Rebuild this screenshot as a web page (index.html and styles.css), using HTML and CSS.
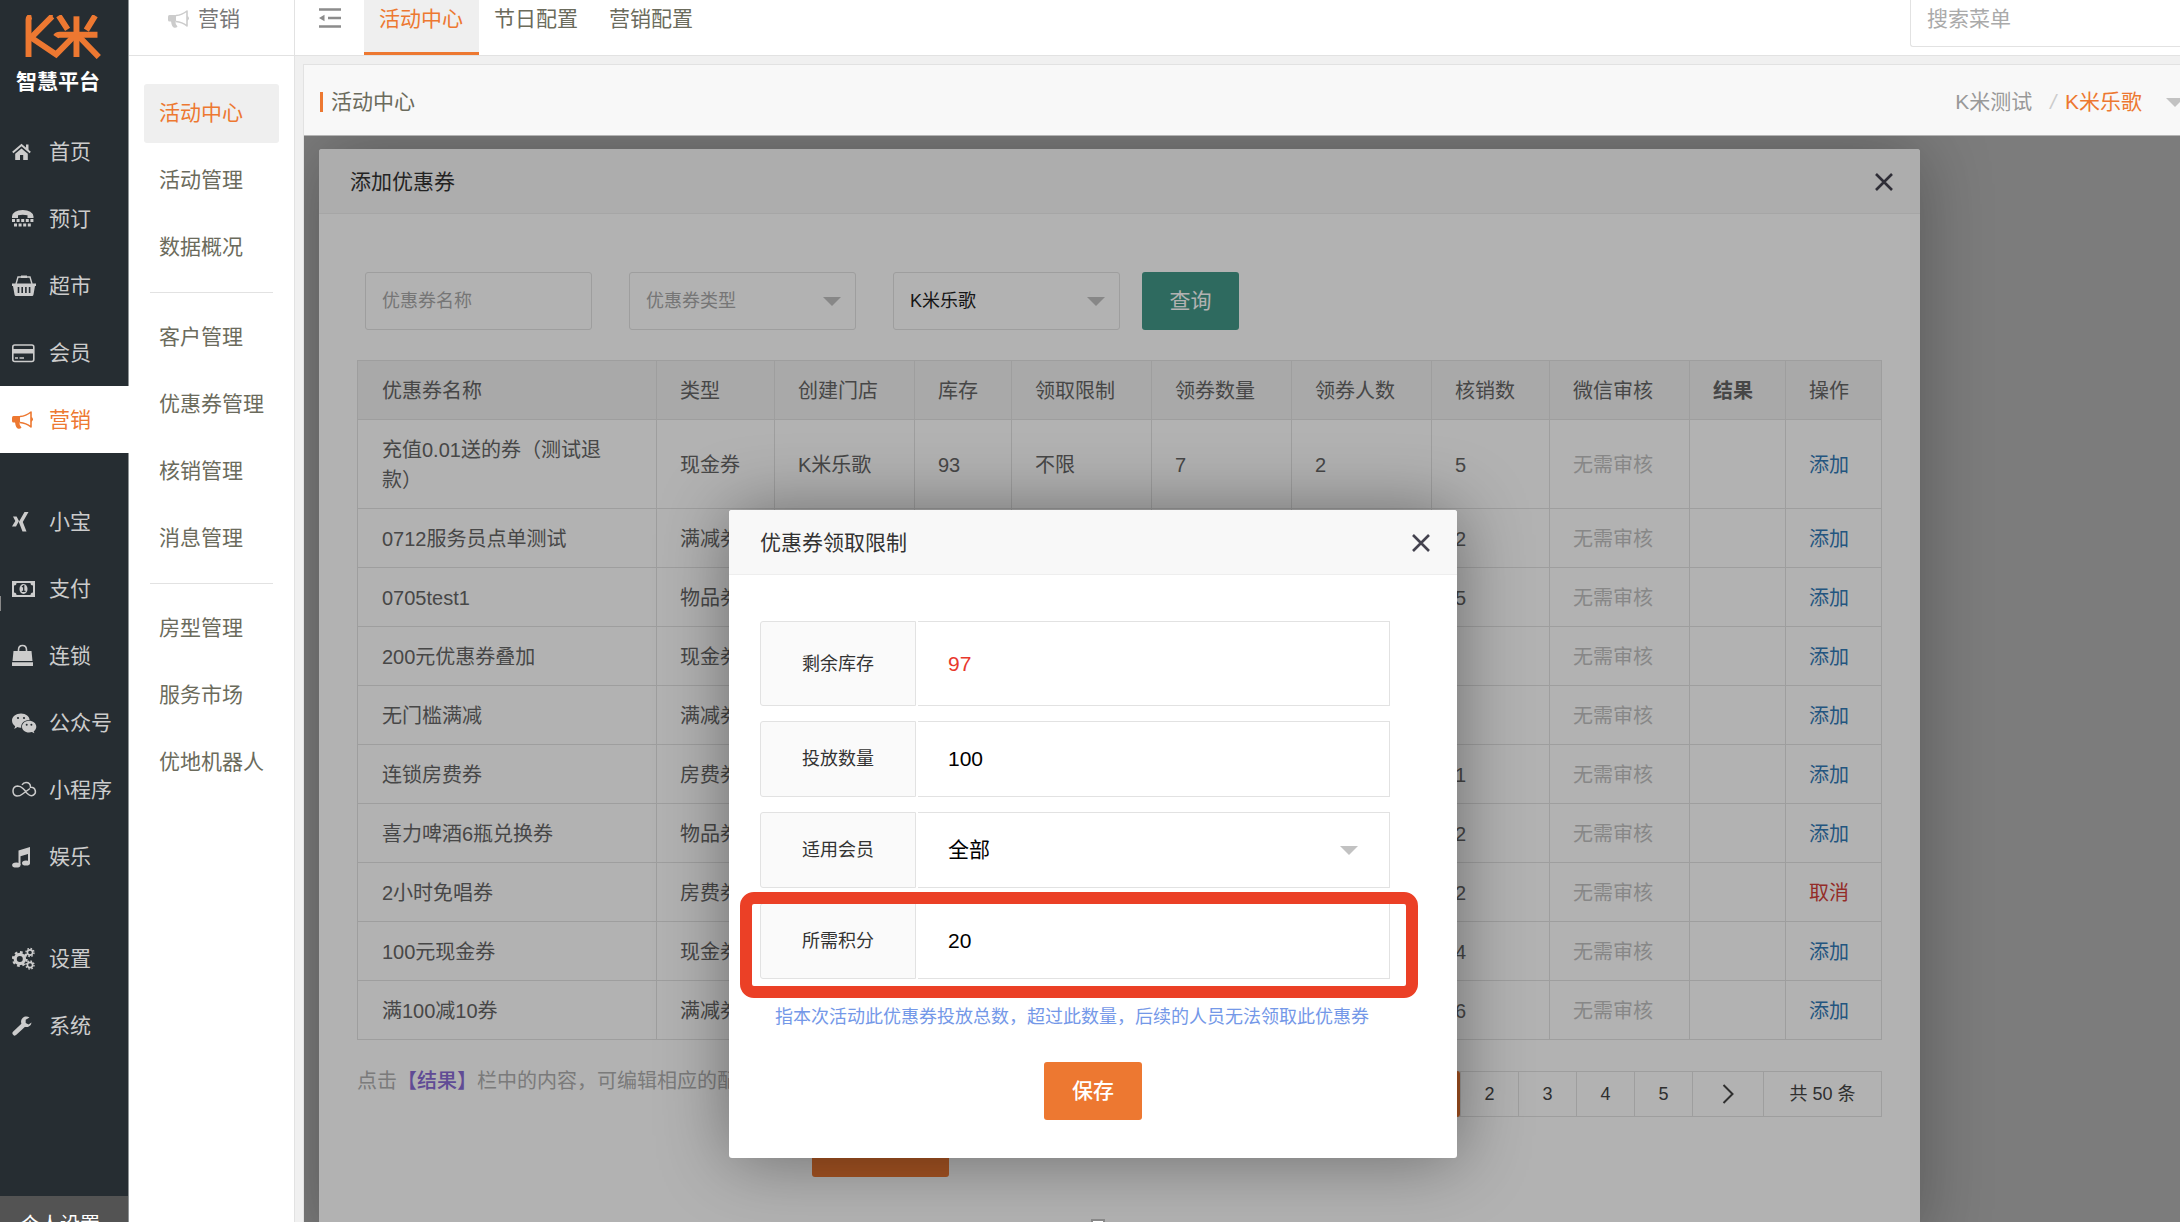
FILE: index.html
```html
<!DOCTYPE html>
<html lang="zh-CN">
<head>
<meta charset="utf-8">
<title>活动中心 - K米智慧平台</title>
<link rel="stylesheet" href="styles.css">
</head>
<body>
<svg class="sprite" aria-hidden="true">
  <symbol id="i-horn" viewBox="0 0 26 24">
    <path d="M1.5 8H8v6.500H1.500Q0 14.500 0 13V9.500Q0 8 1.500 8Z" fill="currentColor"/>
    <path d="M3 14h4.500q-.5 3 2 5.500-1 1.500-3 1.300-2.800-.3-3.500-6.800Z" fill="currentColor"/>
    <path d="M8 8.500Q14 8 19 4v15Q14 15 8 14.500" fill="none" stroke="currentColor" stroke-width="1.600" stroke-linejoin="round"/>
    <path d="M19 9q2 .5 2 2.300T19 14Z" fill="currentColor"/>
  </symbol>
  <symbol id="i-caret" viewBox="0 0 18 9"><path d="M0 0h18L9 9Z" fill="currentColor"/></symbol>
  <symbol id="i-close" viewBox="0 0 18 18"><path d="M1 1l16 16M17 1L1 17" fill="none" stroke="currentColor" stroke-width="2.600"/></symbol>
</svg>

<div class="app">
  <aside class="side">
    <div class="brand">
      <svg class="brand-logo" viewBox="72 44 234 134" role="img" aria-label="K米">
        <g fill="none" stroke="#ed7831" stroke-width="18">
          <path d="M84 172V58q0-8 9-10"/>
          <path d="M158 48h-2L92 113l76 51 57-58"/>
          <path d="M167 110q4-6 12-6h115"/>
          <path d="M230 172V48"/>
          <path d="M176 46l27 42M287 46l-27 44M236 108l62 64"/>
        </g>
      </svg>
      <strong class="brand-name">智慧平台</strong>
    </div>
    <nav class="menu">
      <a href="#"><svg viewBox="0 0 26 24"><path d="M.8 12.500L9.500 5l8.700 7.500" fill="none" stroke="currentColor" stroke-width="2"/><path d="M14 4.500h2.500v6L14 8.500ZM9.500 8.500l6.300 5.300V20h-4.600v-5H8v5H3.200v-6.200Z" fill="currentColor"/></svg>首页</a>
      <a href="#"><svg viewBox="0 0 26 24"><path d="M0 9.500Q1 3 10.700 3t10.800 6.500V11h-6V8.300q-4.800-1.300-9.500 0V11H0Z" fill="currentColor"/><path d="M0 13.500h21.500M2 18h18" stroke="currentColor" stroke-width="3" stroke-dasharray="3 1.600"/></svg>预订</a>
      <a href="#"><svg viewBox="0 0 26 24"><path d="M4 10l2-7h12l2 7" fill="none" stroke="currentColor" stroke-width="1.400"/><path d="M9 1.500h6V4H9ZM0 9.500h24V12h-1l-1.500 8.500Q21.300 22 20 22H4q-1.300 0-1.500-1.500L1 12H0Z" fill="currentColor"/><path d="M6.500 13v6M10.200 13v6M13.900 13v6M17.600 13v6" stroke="#262d32" stroke-width="1.600"/></svg>超市</a>
      <a href="#"><svg viewBox="0 0 26 24"><rect x=".8" y="4" width="21" height="16.500" rx="2" fill="none" stroke="currentColor" stroke-width="1.600"/><path d="M1 8h21v4.500H1Z" fill="currentColor"/><path d="M3 17h3M7.500 17h4.500" stroke="currentColor" stroke-width="1.400"/></svg>会员</a>
      <a href="#" class="on"><svg><use href="#i-horn"/></svg>营销</a>
      <a href="#" class="split"><svg viewBox="0 0 26 24"><path d="M1 6.500h3.600L7 11l-3 5.500H0L3.300 11ZM12.500 2h4L10.800 12l3.700 9.500h-4L6.800 12Z" fill="currentColor"/></svg>小宝</a>
      <a href="#"><svg viewBox="0 0 26 24"><path fill-rule="evenodd" d="M0 4h23v16H0ZM4.500 6Q4.500 8.500 2 8.500v7q2.500 0 2.500 2.500h14q0-2.500 2.500-2.500v-7q-2.500 0-2.500-2.500Z" fill="currentColor"/><ellipse cx="11.500" cy="12" rx="4" ry="5" fill="currentColor"/><path d="M10 10l1.700-1.300V14M9.800 14.300h3.700" fill="none" stroke="#262d32" stroke-width="1.300"/></svg>支付</a>
      <a href="#"><svg viewBox="0 0 26 24"><path d="M1.500 7h18l1 10H.5ZM0 18.200h21v3.300Q21 22 20.500 22H.5Q0 22 0 21.500Z" fill="currentColor"/><path d="M6.500 9.500V6q0-4.500 4-4.500t4 4.500v3.500" fill="none" stroke="currentColor" stroke-width="1.600"/></svg>连锁</a>
      <a href="#"><svg viewBox="0 0 26 24"><path d="M9 2.500c5 0 8.600 3 8.600 6.600-5 0-9 3-8.300 7.600-1.600.1-2.700-.2-3.800-.6L2.300 18l.9-2.800C1.200 13.700 0 11.800 0 9.500 0 5.500 4 2.500 9 2.500Z" fill="currentColor"/><path d="M17 9.700c4 0 7.300 2.600 7.300 6 0 1.800-1 3.400-2.600 4.600l.7 2-2.500-1.200c-.9.300-1.900.4-2.900.4-4 0-7-2.600-7-5.800s3-6 7-6Z" fill="currentColor"/><g fill="#262d32"><circle cx="6" cy="7" r="1.100"/><circle cx="12" cy="7" r="1.100"/><circle cx="14.700" cy="13.700" r="1"/><circle cx="19.400" cy="13.700" r="1"/></g></svg>公众号</a>
      <a href="#"><svg viewBox="0 0 26 24"><path d="M13 13.500l3.500 3q2.500 2 5 .5t1.800-4.200Q22.500 9 18.500 9.300 18.500 4.500 14 4.500q-2.500 0-4 2.300M18 10.500L10.500 16q-2.500 2-5.500 2-4-.5-4-5t4.500-5q3 0 5.500 2.500l3 3" fill="none" stroke="currentColor" stroke-width="1.500"/></svg>小程序</a>
      <a href="#"><svg viewBox="0 0 26 24"><path d="M6.500 5.500L18 2v16.500h-2V9L8.500 11.300V20h-2Z" fill="currentColor"/><ellipse cx="4.300" cy="20" rx="4.200" ry="2.600" fill="currentColor"/><ellipse cx="14" cy="18" rx="4" ry="2.600" fill="currentColor"/></svg>娱乐</a>
      <a href="#" class="split"><svg viewBox="0 0 26 24"><g fill="none" stroke="currentColor"><circle cx="7.800" cy="12" r="4.600" stroke-width="3.200"/><circle cx="7.800" cy="12" r="6.800" stroke-width="2.200" stroke-dasharray="2.700 2.640"/><circle cx="18" cy="5.500" r="2.600" stroke-width="1.600"/><circle cx="18" cy="5.500" r="4" stroke-width="1.400" stroke-dasharray="1.600 1.540"/><circle cx="18" cy="18" r="2.600" stroke-width="1.600"/><circle cx="18" cy="18" r="4" stroke-width="1.400" stroke-dasharray="1.600 1.540"/></g></svg>设置</a>
      <a href="#"><svg viewBox="0 0 26 24"><path d="M2.800 19.200L11.500 11" stroke="currentColor" stroke-width="4.600" stroke-linecap="round"/><path d="M17.500 3.500A5.300 5.300 0 1 0 19.600 8.500L16.500 10.500 13.700 9V5.800Z" fill="currentColor"/></svg>系统</a>
    </nav>
    <a class="profile" href="#">个人设置</a>
  </aside>

  <aside class="sub">
    <h2 class="sub-head"><svg><use href="#i-horn"/></svg>营销</h2>
    <nav class="sub-menu">
      <a href="#" class="on">活动中心</a>
      <a href="#">活动管理</a>
      <a href="#">数据概况</a>
      <hr>
      <a href="#">客户管理</a>
      <a href="#">优惠券管理</a>
      <a href="#">核销管理</a>
      <a href="#">消息管理</a>
      <hr>
      <a href="#">房型管理</a>
      <a href="#">服务市场</a>
      <a href="#">优地机器人</a>
    </nav>
  </aside>

  <main class="main">
    <header class="top">
      <button class="fold" type="button" aria-label="收起菜单"><svg viewBox="0 0 22 20"><path d="M0 1.500h22M9 10h13M0 18.500h22" stroke="#8c8c8c" stroke-width="2.600"/><path d="M0 10l5.500-3.200v6.400Z" fill="#8c8c8c"/></svg></button>
      <nav class="tabs">
        <a href="#" class="on">活动中心</a>
        <a href="#">节日配置</a>
        <a href="#">营销配置</a>
      </nav>
      <input class="search" type="text" placeholder="搜索菜单" aria-label="搜索菜单">
    </header>

    <section class="panel">
      <header class="panel-head">
        <h1>活动中心</h1>
        <div class="crumb"><span>K米测试</span><i>/</i><a href="#">K米乐歌</a><svg><use href="#i-caret"/></svg></div>
      </header>
      <div class="stage">
        <div class="shade"></div>

        <section class="dialog dialog-list">
          <header class="dialog-head"><h3>添加优惠券</h3><button class="close" type="button" aria-label="关闭"><svg><use href="#i-close"/></svg></button></header>
          <form class="filter">
            <input class="field" type="text" placeholder="优惠券名称" aria-label="优惠券名称">
            <div class="pick"><select class="field blank" aria-label="优惠券类型"><option>优惠券类型</option></select><svg><use href="#i-caret"/></svg></div>
            <div class="pick"><select class="field" aria-label="门店"><option>K米乐歌</option></select><svg><use href="#i-caret"/></svg></div>
            <button class="query" type="button">查询</button>
          </form>
          <div class="list">
            <table>
              <colgroup><col class="w-name"><col class="w-118"><col class="w-140"><col class="w-97"><col class="w-140"><col class="w-140"><col class="w-140"><col class="w-118"><col class="w-140"><col class="w-96"><col class="w-96"></colgroup>
              <thead><tr><th>优惠券名称</th><th>类型</th><th>创建门店</th><th>库存</th><th>领取限制</th><th>领券数量</th><th>领券人数</th><th>核销数</th><th>微信审核</th><th class="strong">结果</th><th>操作</th></tr></thead>
              <tbody>
                <tr><td>充值0.01送的券（测试退款）</td><td>现金券</td><td>K米乐歌</td><td>93</td><td>不限</td><td>7</td><td>2</td><td>5</td><td class="mute">无需审核</td><td></td><td><a href="#">添加</a></td></tr>
                <tr><td>0712服务员点单测试</td><td>满减券</td><td></td><td></td><td></td><td></td><td></td><td>2</td><td class="mute">无需审核</td><td></td><td><a href="#">添加</a></td></tr>
                <tr><td>0705test1</td><td>物品券</td><td></td><td></td><td></td><td></td><td></td><td>5</td><td class="mute">无需审核</td><td></td><td><a href="#">添加</a></td></tr>
                <tr><td>200元优惠券叠加</td><td>现金券</td><td></td><td></td><td></td><td></td><td></td><td></td><td class="mute">无需审核</td><td></td><td><a href="#">添加</a></td></tr>
                <tr><td>无门槛满减</td><td>满减券</td><td></td><td></td><td></td><td></td><td></td><td></td><td class="mute">无需审核</td><td></td><td><a href="#">添加</a></td></tr>
                <tr><td>连锁房费券</td><td>房费券</td><td></td><td></td><td></td><td></td><td></td><td>1</td><td class="mute">无需审核</td><td></td><td><a href="#">添加</a></td></tr>
                <tr><td>喜力啤酒6瓶兑换券</td><td>物品券</td><td></td><td></td><td></td><td></td><td></td><td>2</td><td class="mute">无需审核</td><td></td><td><a href="#">添加</a></td></tr>
                <tr><td>2小时免唱券</td><td>房费券</td><td></td><td></td><td></td><td></td><td></td><td>2</td><td class="mute">无需审核</td><td></td><td><a href="#" class="undo">取消</a></td></tr>
                <tr><td>100元现金券</td><td>现金券</td><td></td><td></td><td></td><td></td><td></td><td>4</td><td class="mute">无需审核</td><td></td><td><a href="#">添加</a></td></tr>
                <tr><td>满100减10券</td><td>满减券</td><td></td><td></td><td></td><td></td><td></td><td>6</td><td class="mute">无需审核</td><td></td><td><a href="#">添加</a></td></tr>
              </tbody>
            </table>
            <div class="list-foot">
              <p class="note">点击<b>【结果】</b>栏中的内容，可编辑相应的配置</p>
              <nav class="pages">
                <a href="#" class="on">1</a><a href="#">2</a><a href="#">3</a><a href="#">4</a><a href="#">5</a><a href="#" class="next" aria-label="下一页"><svg viewBox="0 0 12 20"><path d="M1.500 1L10.500 10l-9 9" fill="none" stroke="currentColor" stroke-width="2"/></svg></a><span>共 50 条</span>
              </nav>
            </div>
            <button class="save save-list" type="button">保存</button>
          </div>
        </section>

        <div class="shade"></div>

        <section class="dialog dialog-limit">
          <header class="dialog-head"><h3>优惠券领取限制</h3><button class="close" type="button" aria-label="关闭"><svg><use href="#i-close"/></svg></button></header>
          <form class="limit">
            <div class="row tall"><span class="row-name">剩余库存</span><output class="row-value stock">97</output></div>
            <div class="row"><label class="row-name" for="amount">投放数量</label><input class="row-value" id="amount" type="text" value="100"></div>
            <div class="row"><label class="row-name" for="member">适用会员</label><div class="pick"><select class="row-value" id="member"><option>全部</option></select><svg><use href="#i-caret"/></svg></div></div>
            <div class="row"><label class="row-name" for="points">所需积分</label><input class="row-value" id="points" type="text" value="20"><span class="mark"></span></div>
            <p class="hint">指本次活动此优惠券投放总数，超过此数量，后续的人员无法领取此优惠券</p>
          </form>
          <button class="save save-limit" type="button">保存</button>
        </section>
      </div>
    </section>
  </main>
</div>
<i class="grip grip-left"></i>
<i class="grip grip-bottom"></i>
</body>
</html>
```
FILE: styles.css
```css
* { box-sizing: border-box; }
body {
  margin: 0;
  font: 21px/30px "Liberation Sans", "Noto Sans CJK SC", sans-serif;
  color: #333;
}
a { color: inherit; text-decoration: none; }
h1, h2, h3, p { margin: 0; font-size: 21px; font-weight: 400; }
button, input, select { font: inherit; color: inherit; margin: 0; }
button { border: 0; background: none; padding: 0; }
.sprite { position: absolute; width: 0; height: 0; }

.app { display: flex; height: 100vh; overflow: hidden; background: #f0f0f0; }

/* primary navigation */
.side { flex: none; width: 129px; display: flex; flex-direction: column; background: #262d32; border-right: 1px solid #8f9496; color: #ccc; }
.brand { height: 118px; padding: 15px 0 0 16px; }
.brand-logo { display: block; width: 78px; height: 44px; margin-left: 8px; }
.brand-name { display: block; margin-top: 9px; color: #fff; line-height: 28px; }
.menu { display: flex; flex-direction: column; }
.menu a { display: flex; align-items: center; gap: 11px; height: 67px; padding-left: 12px; white-space: nowrap; }
.menu svg { width: 26px; height: 24px; flex: none; }
.menu .on { background: #fff; color: #ed7831; margin-right: -1px; }
.menu .split { margin-top: 35px; }
.profile { margin-top: auto; height: 26px; overflow: hidden; padding: 14px 0 0 20px; background: #535353; color: #fff; font-size: 20px; }

/* secondary navigation */
.sub { flex: none; width: 166px; background: #fff; border-right: 1px solid #e2e2e2; color: #6b6b5c; }
.sub-head { display: flex; align-items: center; gap: 4px; height: 56px; padding: 0 0 17px 39px; border-bottom: 1px solid #e2e2e2; color: #777; }
.sub-head svg { width: 26px; height: 24px; color: #ccc; }
.sub-menu { padding: 28px 15px 0; }
.sub-menu a { display: block; height: 59px; margin-bottom: 8px; padding-left: 15px; line-height: 58px; white-space: nowrap; border-radius: 3px; }
.sub-menu .on { background: #efefef; color: #ed7831; }
.sub-menu hr { height: 1px; margin: 15px 6px; border: 0; background: #e2e2e2; }

/* top bar */
.main { flex: 1; min-width: 0; display: flex; flex-direction: column; }
.top { display: flex; align-items: flex-start; height: 56px; background: #fff; border-bottom: 1px solid #e2e2e2; color: #6b6b5c; }
.fold { width: 22px; height: 20px; margin: 8px 23px 0 24px; }
.fold svg { display: block; width: 22px; height: 20px; }
.tabs { display: flex; }
.tabs a { height: 55px; padding: 4px 16px 0 15px; white-space: nowrap; }
.tabs .on { background: #efefef; border-bottom: 3px solid #ed7831; color: #ed7831; }
.search { width: 270px; height: 47px; margin-left: auto; padding: 0 16px 8px; border: solid #e2e2e2; border-width: 0 0 1px 1px; border-radius: 0 0 0 3px; background: #fff; outline: 0; }
.search::placeholder { color: #aaa; opacity: 1; }

/* content panel */
.panel { flex: 1; min-height: 0; display: flex; flex-direction: column; margin: 8px 0 0 8px; border: solid #e2e2e2; border-width: 1px 0 0 1px; overflow: hidden; }
.panel-head { display: flex; align-items: center; justify-content: space-between; height: 71px; padding: 4px 0 0 16px; background: #f8f8f8; border-bottom: 1px solid #b4b4b4; color: #6b6b5c; }
.panel-head h1 { padding-left: 8px; border-left: 3px solid #ed7831; line-height: 20px; }
.crumb { display: flex; align-items: center; color: #999; white-space: nowrap; }
.crumb i { margin: 0 9px 0 18px; color: #ccc; }
.crumb a { color: #ed7831; }
.crumb svg { width: 18px; height: 9px; margin: 0 -4px 0 24px; color: #c2c2c2; }
.stage { position: relative; flex: 1; overflow: hidden; background: #fff; }
.shade { position: absolute; inset: 0; background: rgba(0, 0, 0, .3); }

/* dialogs */
.dialog { position: absolute; background: #fff; border-radius: 3px; box-shadow: 1px 1px 70px rgba(0, 0, 0, .3); }
.dialog-list { inset: 13px 260px -20px 15px; }
.dialog-limit { left: 425px; top: 374px; width: 728px; box-shadow: 1px 1px 70px rgba(0, 0, 0, .4); }
.dialog-head { display: flex; align-items: center; justify-content: space-between; height: 65px; padding: 2px 27px 0 31px; background: #f8f8f8; border-bottom: 1px solid #eee; border-radius: 3px 3px 0 0; }
.close { width: 18px; height: 18px; color: #44434f; }
.close svg { display: block; width: 18px; height: 18px; }
.pick { position: relative; }
.pick svg { position: absolute; right: 15px; top: 50%; width: 18px; height: 9px; margin-top: -4px; color: #c2c2c2; pointer-events: none; }

.filter { display: flex; gap: 37px; padding: 58px 0 0 46px; }
.field { display: block; width: 227px; height: 58px; padding: 0 16px; border: 1px solid #e2e2e2; border-radius: 3px; background: #fff; appearance: none; outline: 0; font-size: 18px; color: #222; }
.field::placeholder { color: #aaa; opacity: 1; }
.blank { color: #aaa; }
.query { width: 97px; height: 58px; margin-left: -15px; border-radius: 3px; background: #439989; color: #fff; }

.list { padding: 30px 38px 0; }
table { width: 100%; table-layout: fixed; border-collapse: collapse; font-size: 20px; color: #666; }
.w-name { width: 299px; }
.w-140 { width: 140px; }
.w-118 { width: 118px; }
.w-97 { width: 97px; }
.w-96 { width: 96px; }
th, td { height: 59px; padding: 15px 23px 13px; border: 1px solid #e2e2e2; text-align: left; font-weight: 400; }
th:first-child, td:first-child { padding-left: 24px; padding-right: 36px; }
th { background: #f2f2f2; }
td a { color: #337ab7; }
th.strong { font-weight: 700; }
td.mute { color: #c2c2c2; }
td .undo { color: #d43f3a; }
td:last-child, th:last-child { white-space: nowrap; }

.list-foot { display: flex; align-items: flex-start; justify-content: space-between; margin-top: 31px; }
.note { font-size: 20px; line-height: 20px; color: #b0b0b0; }
.note b { font-weight: 500; color: #8a6cd6; }
.pages { display: flex; height: 46px; border: 1px solid #e2e2e2; font-size: 18px; line-height: 44px; text-align: center; color: #444; }
.pages > * { width: 58px; border-left: 1px solid #e2e2e2; }
.pages .on { margin: -1px 0; line-height: 46px; background: #ed7831; color: #fff; border-radius: 3px; }
.pages .next { display: flex; align-items: center; justify-content: center; width: 71px; }
.pages .next svg { width: 12px; height: 20px; }
.pages span { width: 118px; }

.save { display: block; height: 58px; border-radius: 3px; background: #ed7831; color: #fff; font-weight: 500; }
.save-list { width: 137px; margin: 2px 0 0 455px; }
.save-limit { width: 98px; margin: 31px auto 38px; }

.limit { display: flex; flex-direction: column; gap: 15px; padding: 46px 67px 0 31px; }
.row { position: relative; display: flex; gap: 2px; height: 76px; }
.tall { height: 85px; }
.row-name { flex: none; display: flex; align-items: center; justify-content: center; width: 156px; border: 1px solid #e2e2e2; border-radius: 3px 0 0 3px; background: #fafafa; font-size: 18px; }
.row-value { flex: 1; min-width: 0; width: 100%; height: 100%; padding: 0 30px; border: 1px solid #e2e2e2; border-left: 0; background: #fff; color: #000; appearance: none; outline: 0; }
.row .pick { flex: 1; }
.row .pick svg { right: 32px; }
.row .stock { display: flex; align-items: center; color: #e8382d; }
.mark { position: absolute; inset: -11px -28px -19px -20px; border: 12px solid #eb4026; border-radius: 14px; pointer-events: none; }
.hint { margin-top: 9px; padding-left: 15px; font-size: 18px; line-height: 28px; color: #7498e8; white-space: nowrap; }

/* selection grips on the window edge */
.grip { position: fixed; background: #fff; border: 1px solid #888; }
.grip-left { left: -1px; top: 596px; width: 2px; height: 15px; }
.grip-bottom { left: 1091px; bottom: -9px; width: 14px; height: 12px; border-width: 2px; }
```
